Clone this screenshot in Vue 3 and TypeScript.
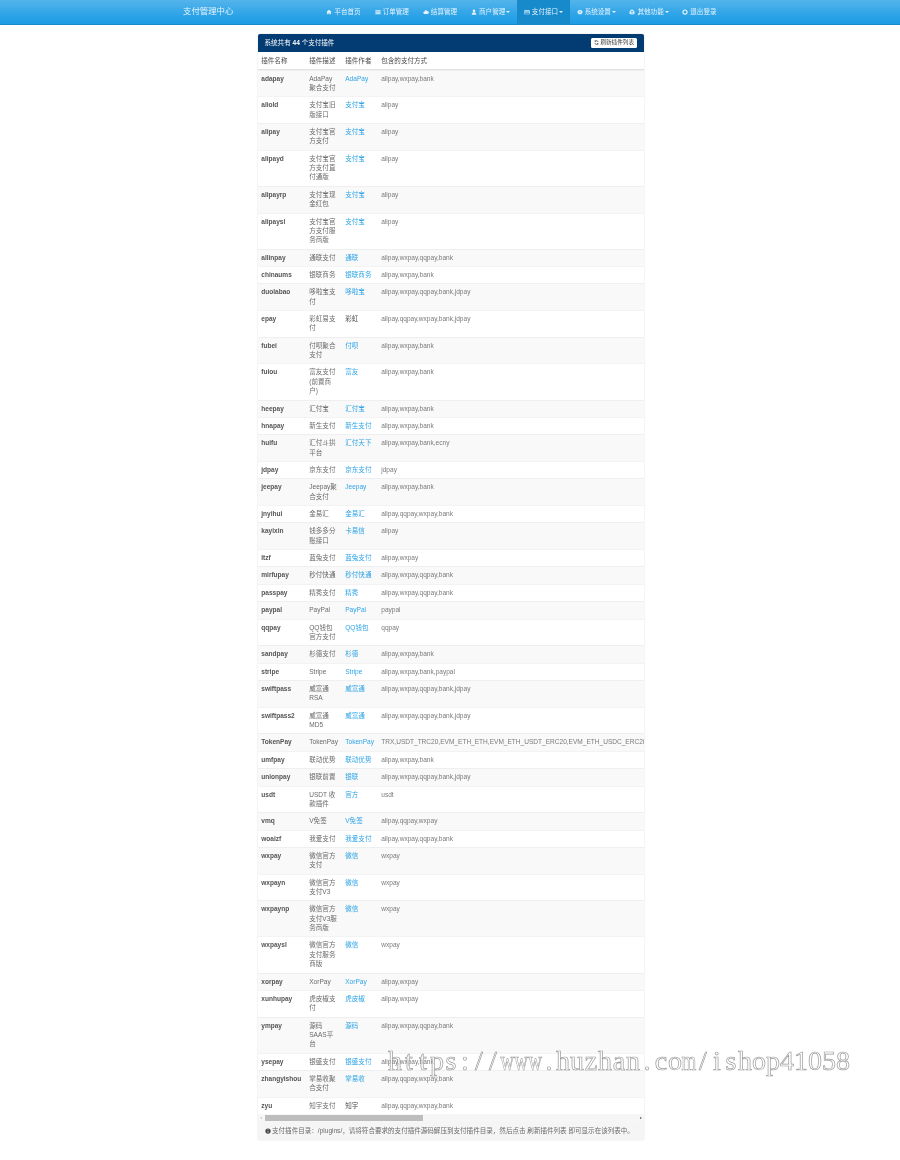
<script setup lang="ts">
interface Plugin {
  name: string
  desc: string
  author: string
  methods: string
  plain?: boolean
}

const navItems = [
  { label: '平台首页', icon: 'home' },
  { label: '订单管理', icon: 'list' },
  { label: '结算管理', icon: 'cloud' },
  { label: '商户管理', icon: 'user', caret: true },
  { label: '支付接口', icon: 'card', caret: true, active: true },
  { label: '系统设置', icon: 'gear', caret: true },
  { label: '其他功能', icon: 'cube', caret: true },
  { label: '退出登录', icon: 'power' },
]

const base = 'alipay,wxpay,bank'
const four = 'alipay,wxpay,qqpay,bank'
const five = 'alipay,wxpay,qqpay,bank,jdpay'
const qfour = 'alipay,qqpay,wxpay,bank'

const plugins: Plugin[] = [
  { name: 'adapay', desc: 'AdaPay聚合支付', author: 'AdaPay', methods: base },
  { name: 'aliold', desc: '支付宝旧版接口', author: '支付宝', methods: 'alipay' },
  { name: 'alipay', desc: '支付宝官方支付', author: '支付宝', methods: 'alipay' },
  { name: 'alipayd', desc: '支付宝官方支付直付通版', author: '支付宝', methods: 'alipay' },
  { name: 'alipayrp', desc: '支付宝现金红包', author: '支付宝', methods: 'alipay' },
  { name: 'alipaysl', desc: '支付宝官方支付服务商版', author: '支付宝', methods: 'alipay' },
  { name: 'allinpay', desc: '通联支付', author: '通联', methods: four },
  { name: 'chinaums', desc: '银联商务', author: '银联商务', methods: base },
  { name: 'duolabao', desc: '哆啦宝支付', author: '哆啦宝', methods: five },
  { name: 'epay', desc: '彩虹易支付', author: '彩虹', methods: 'alipay,qqpay,wxpay,bank,jdpay', plain: true },
  { name: 'fubei', desc: '付呗聚合支付', author: '付呗', methods: base },
  { name: 'fuiou', desc: '富友支付(前置商户)', author: '富友', methods: base },
  { name: 'heepay', desc: '汇付宝', author: '汇付宝', methods: base },
  { name: 'hnapay', desc: '新生支付', author: '新生支付', methods: base },
  { name: 'huifu', desc: '汇付斗拱平台', author: '汇付天下', methods: 'alipay,wxpay,bank,ecny' },
  { name: 'jdpay', desc: '京东支付', author: '京东支付', methods: 'jdpay' },
  { name: 'jeepay', desc: 'Jeepay聚合支付', author: 'Jeepay', methods: base },
  { name: 'jnyihui', desc: '金易汇', author: '金易汇', methods: qfour },
  { name: 'kayixin', desc: '钱多多分账接口', author: '卡易信', methods: 'alipay' },
  { name: 'ltzf', desc: '蓝兔支付', author: '蓝兔支付', methods: 'alipay,wxpay' },
  { name: 'mirfupay', desc: '秒付快通', author: '秒付快通', methods: four },
  { name: 'passpay', desc: '精秀支付', author: '精秀', methods: four },
  { name: 'paypal', desc: 'PayPal', author: 'PayPal', methods: 'paypal' },
  { name: 'qqpay', desc: 'QQ钱包官方支付', author: 'QQ钱包', methods: 'qqpay' },
  { name: 'sandpay', desc: '杉德支付', author: '杉德', methods: base },
  { name: 'stripe', desc: 'Stripe', author: 'Stripe', methods: 'alipay,wxpay,bank,paypal' },
  { name: 'swiftpass', desc: '威富通RSA', author: '威富通', methods: five },
  { name: 'swiftpass2', desc: '威富通MD5', author: '威富通', methods: five },
  {
    name: 'TokenPay',
    desc: 'TokenPay',
    author: 'TokenPay',
    methods: 'TRX,USDT_TRC20,EVM_ETH_ETH,EVM_ETH_USDT_ERC20,EVM_ETH_USDC_ERC20,EVM_BSC_BNB,EVM_BSC_USDT_ERC20,EVM_BSC_USDC_ERC20,EVM_Polygon_POL,EVM_Polygon_USDT_ERC20',
  },
  { name: 'umfpay', desc: '联动优势', author: '联动优势', methods: base },
  { name: 'unionpay', desc: '银联前置', author: '银联', methods: five },
  { name: 'usdt', desc: 'USDT 收款插件', author: '官方', methods: 'usdt' },
  { name: 'vmq', desc: 'V免签', author: 'V免签', methods: 'alipay,qqpay,wxpay' },
  { name: 'woaizf', desc: '我爱支付', author: '我爱支付', methods: four },
  { name: 'wxpay', desc: '微信官方支付', author: '微信', methods: 'wxpay' },
  { name: 'wxpayn', desc: '微信官方支付V3', author: '微信', methods: 'wxpay' },
  { name: 'wxpaynp', desc: '微信官方支付V3服务商版', author: '微信', methods: 'wxpay' },
  { name: 'wxpaysl', desc: '微信官方支付服务商版', author: '微信', methods: 'wxpay' },
  { name: 'xorpay', desc: 'XorPay', author: 'XorPay', methods: 'alipay,wxpay' },
  { name: 'xunhupay', desc: '虎皮椒支付', author: '虎皮椒', methods: 'alipay,wxpay' },
  { name: 'ympay', desc: '源码SAAS平台', author: '源码', methods: four },
  { name: 'ysepay', desc: '银盛支付', author: '银盛支付', methods: base },
  { name: 'zhangyishou', desc: '掌易收聚合支付', author: '掌易收', methods: qfour },
  { name: 'zyu', desc: '知宇支付', author: '知宇', methods: qfour, plain: true },
]

const watermark = 'https://www.huzhan.com/ishop41058'.split('')
</script>

<template>
  <div class="page">
    <nav class="navbar">
      <a class="brand">支付管理中心</a>
      <ul class="nav">
        <li v-for="item in navItems" :key="item.label" :class="{ active: item.active }">
          <svg class="nav-icon" viewBox="0 0 16 16" fill="currentColor">
            <path v-if="item.icon === 'home'" d="M8 2 1 8h2v6h4v-4h2v4h4V8h2z" />
            <path v-else-if="item.icon === 'list'" d="M1 3h14v3H1zM1 7h14v3H1zM1 11h14v3H1z" />
            <path v-else-if="item.icon === 'cloud'" d="M4 13a3 3 0 0 1-.5-6A4.5 4.5 0 0 1 12 6a3.5 3.5 0 0 1 0 7z" />
            <path v-else-if="item.icon === 'user'" d="M8 1.500a3.500 3.500 0 1 1 0 7 3.500 3.500 0 0 1 0-7zM2 15c0-4 2-5.500 6-5.500s6 1.500 6 5.500z" />
            <path v-else-if="item.icon === 'card'" fill-rule="evenodd" d="M1 3h14v11H1zM2.500 5v1.500h11V5zM2.500 9v3.500h11V9z" />
            <path v-else-if="item.icon === 'gear'" fill-rule="evenodd" d="M8 1l1.500 2 2.500-.5.500 2.500 2.500 1-1 2.500 1 2-2.500 1-.5 2.500-2.500-.5L8 15l-1.500-1.500-2.500.5-.5-2.500-2.500-1 1-2-1-2.500 2.500-1 .5-2.500 2.500.5zM8 6a2 2 0 1 0 0 4 2 2 0 0 0 0-4z" />
            <path v-else-if="item.icon === 'cube'" d="M8 1l6 2.500-6 2.500-6-2.500zM1.500 5l5.500 2.300V15l-5.500-2.500zM14.500 5v7.500L9 15V7.300z" />
            <path v-else fill-rule="evenodd" d="M8 1a7 7 0 1 1 0 14A7 7 0 0 1 8 1zm0 3a4 4 0 1 0 0 8 4 4 0 0 0 0-8z" />
          </svg>
          <span>{{ item.label }}</span>
          <i v-if="item.caret" class="caret"></i>
        </li>
      </ul>
    </nav>

    <section class="panel">
      <header class="panel-heading">
        <span>系统共有 <b>44</b> 个支付插件</span>
        <button class="refresh" type="button">
          <svg viewBox="0 0 16 16" fill="none" stroke="currentColor" stroke-width="2.200">
            <path d="M13.500 6A6 6 0 0 0 3 4.500M2.500 10A6 6 0 0 0 13 11.500" />
            <path d="M3 1v4h4M13 15v-4H9" stroke-width="1.600" />
          </svg>
          刷新插件列表
        </button>
      </header>

      <div class="table-wrap">
        <div class="row head">
          <div>插件名称</div>
          <div>插件描述</div>
          <div>插件作者</div>
          <div>包含的支付方式</div>
        </div>
        <div v-for="p in plugins" :key="p.name" class="row">
          <div><b>{{ p.name }}</b></div>
          <div class="desc">{{ p.desc }}</div>
          <div>
            <span v-if="p.plain">{{ p.author }}</span>
            <a v-else>{{ p.author }}</a>
          </div>
          <div class="methods">{{ p.methods }}</div>
        </div>
      </div>

      <div class="scrollbar">
        <i class="arrow left"></i>
        <div class="track"><div class="thumb"></div></div>
        <i class="arrow right"></i>
      </div>

      <footer class="panel-footer">
        <svg viewBox="0 0 16 16" fill="currentColor">
          <path fill-rule="evenodd" d="M8 1a7 7 0 1 1 0 14A7 7 0 0 1 8 1zM7 3.500v2h2v-2zM6.500 7v1.200H7V11h-.5v1.200h3V11H9V7z" />
        </svg>
        <span>支付插件目录：/plugins/，请将符合要求的支付插件源码解压到支付插件目录，然后点击 刷新插件列表 即可显示在该列表中。</span>
      </footer>
    </section>

    <div class="watermark">
      <span v-for="(ch, i) in watermark" :key="i" :class="{ wide: ch === 'w' || ch === 'm' }">{{ ch }}</span>
    </div>
  </div>
</template>

<style>
html,
body {
  margin: 0;
  background: #fff;
}
</style>

<style scoped>
.page {
  position: relative;
  width: 900px;
  height: 1160px;
  overflow: hidden;
  font-family: "Liberation Sans", "Noto Sans CJK SC", sans-serif;
  font-size: 6.55px;
  line-height: 9.36px;
  color: #4a4a4a;
  filter: blur(0.42px);
}
.navbar {
  display: flex;
  height: 23.5px;
  background: linear-gradient(to bottom, #54b4eb, #2fa4e7 60%, #1d9ce5);
  border-bottom: 0.5px solid #178acc;
  color: #fff;
  box-sizing: content-box;
}
.brand {
  margin-left: 183px;
  line-height: 23.5px;
  font-size: 8.42px;
  color: #e6f4fd;
}
.nav {
  display: flex;
  list-style: none;
  margin: 0 0 0 86px;
  padding: 0;
}
.nav li {
  display: flex;
  align-items: center;
  gap: 2px;
  padding: 0 7px;
  color: #e4f3fd;
}
.nav li.active {
  background: #178acc;
}
.nav-icon {
  width: 6px;
  height: 6px;
}
.caret {
  width: 0;
  height: 0;
  margin-left: -0.8px;
  margin-right: -0.6px;
  border-left: 2.1px solid transparent;
  border-right: 2.1px solid transparent;
  border-top: 2.1px solid currentColor;
}
.panel {
  width: 386px;
  margin: 9px 0 0 257.5px;
  border-radius: 2px;
  background: #fff;
  box-shadow: 0 0 1.5px rgba(0, 0, 0, 0.22);
}
.panel-heading {
  display: flex;
  align-items: center;
  justify-content: space-between;
  height: 18.7px;
  padding: 0 7px;
  background: #033c73;
  border-radius: 2px 2px 0 0;
  color: #fff;
}
.refresh {
  display: flex;
  align-items: center;
  gap: 1.500px;
  height: 10px;
  padding: 0 2.500px;
  border: 0;
  border-radius: 1.500px;
  background: #fff;
  color: #333;
  font: inherit;
  font-size: 5.600px;
}
.refresh svg {
  width: 5px;
  height: 5px;
}
.table-wrap {
  overflow: hidden;
}
.row {
  display: grid;
  grid-template-columns: 48px 36px 36px 780px;
  width: 900px;
  box-shadow: inset 0 1px 0 rgba(221, 221, 221, 0.35);
}
.row:nth-child(even) {
  background: #f9f9f9;
}
.row > div {
  padding: 4.015px 3.75px;
  white-space: nowrap;
}
.row > div.desc {
  white-space: normal;
  color: #6a6a6a;
}
.row > div.methods {
  color: #7a7a7a;
}
.row b {
  color: #555;
}
.row a {
  color: #2fa4e7;
}
.row.head {
  background: #fff;
  box-shadow: inset 0 -1px 0 #e2e2e2;
}
.scrollbar {
  display: flex;
  align-items: center;
  height: 8px;
  padding: 0 2px;
  gap: 2px;
  background: #f6f6f6;
}
.track {
  flex: 1;
  height: 100%;
  padding: 1px 0 1px 1px;
  box-sizing: border-box;
}
.thumb {
  width: 158px;
  height: 100%;
  background: #bdbdbd;
}
.arrow {
  width: 0;
  height: 0;
  border-top: 1.500px solid transparent;
  border-bottom: 1.500px solid transparent;
}
.arrow.left {
  border-right: 2px solid #c6c6c6;
}
.arrow.right {
  border-left: 2px solid #555;
}
.panel-footer {
  display: flex;
  align-items: center;
  gap: 1.500px;
  height: 18px;
  padding: 0 7px;
  background: #f5f5f5;
  border-radius: 0 0 2px 2px;
  color: #6a6a6a;
  white-space: nowrap;
}
.panel-footer svg {
  flex: none;
  width: 6px;
  height: 6px;
  color: #444;
}
.watermark {
  position: absolute;
  left: 388px;
  top: 1045px;
  display: flex;
  font-family: "Liberation Serif", serif;
  font-size: 28px;
  line-height: 32px;
  color: rgba(255, 255, 255, 0.55);
  -webkit-text-stroke: 0.7px rgba(120, 120, 120, 0.75);
}
.watermark span {
  width: 14px;
  display: flex;
  justify-content: center;
}
.watermark span.wide {
  transform: scaleX(0.68);
}
</style>
